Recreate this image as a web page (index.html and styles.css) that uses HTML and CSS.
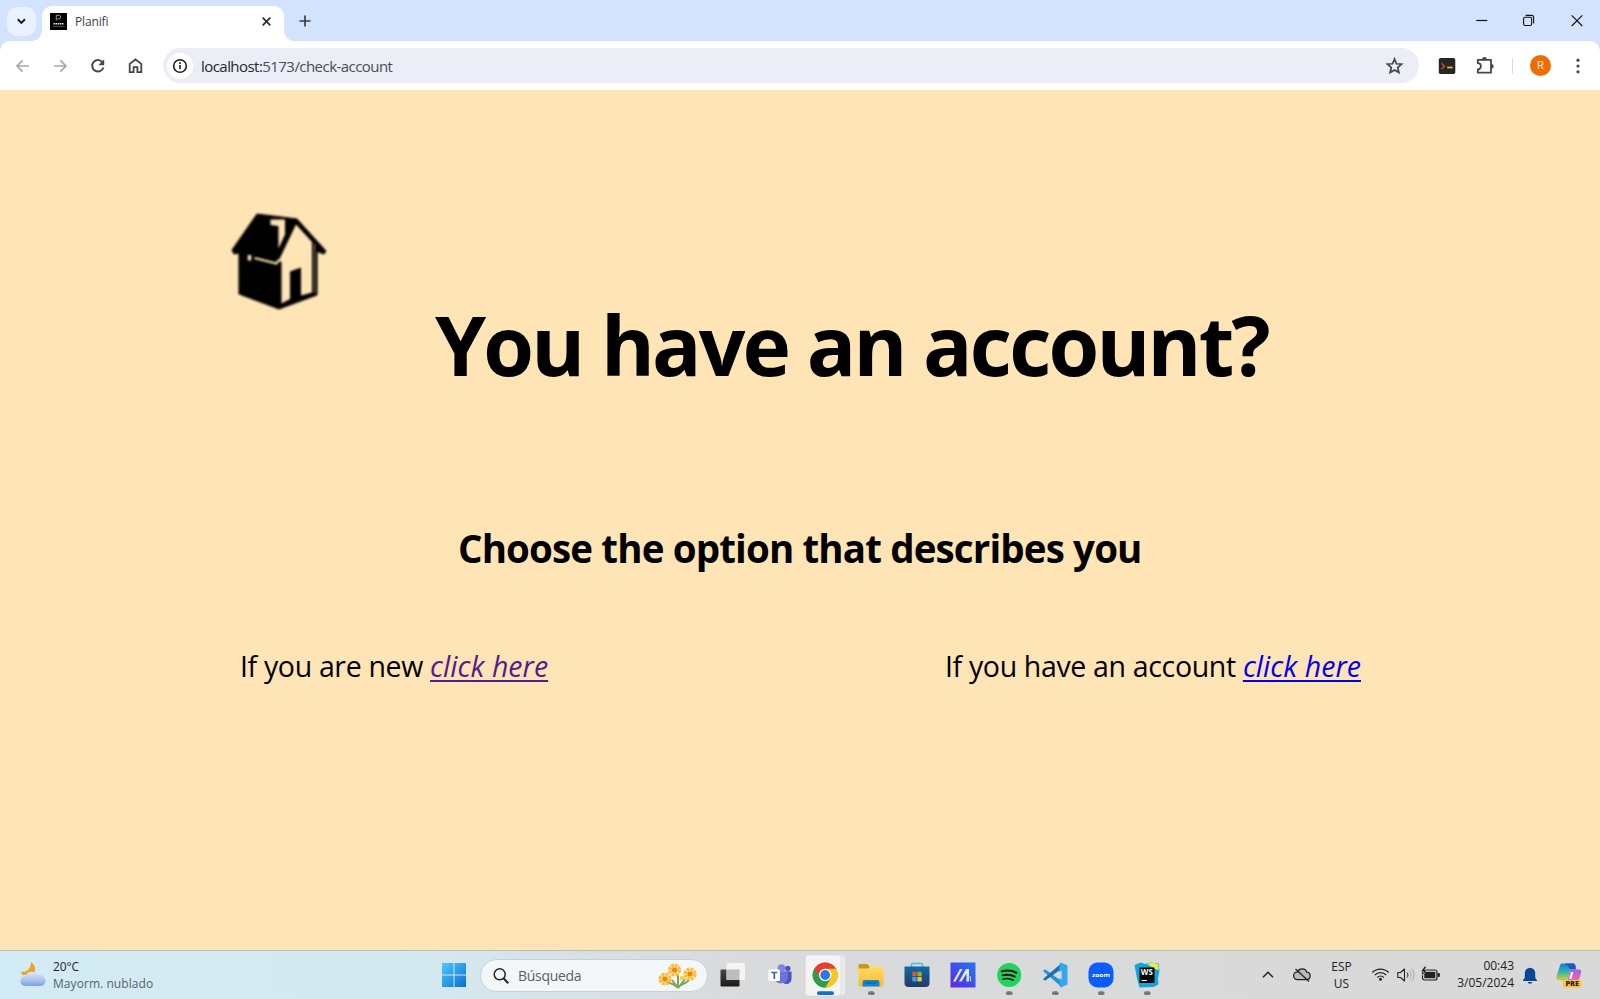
FILE: index.html
```html
<!DOCTYPE html>
<html lang="en">
<head>
<meta charset="utf-8">
<title>Planifi</title>
<link rel="stylesheet" href="styles.css">
</head>
<body>
<div class="screen">
  <header class="tabstrip">
    <button class="tab-search" aria-label="Search tabs"><svg width="29" height="29" viewBox="0 0 29 29"><path d="M10.8 12.3l3.6 3.6 3.6-3.6" fill="none" stroke="#1f1f1f" stroke-width="2"/></svg></button>
    <div class="tab">
      <svg class="favicon" width="17" height="17" viewBox="0 0 17 17"><rect width="17" height="17" fill="#000"/><path d="M6.3 7.5V2.3h2.5a1.7 1.7 0 0 1 0 3.6H7.4" fill="none" stroke="#aaa" stroke-width=".9"/><path d="M3.5 10.7h10" stroke="#ddd" stroke-width="1.6" stroke-dasharray="1.6 .5"/><path d="M2.5 13.3h12" stroke="#777" stroke-width=".7"/></svg>
      <span class="tab-title">Planifi</span>
      <svg class="tab-close" width="17" height="17" viewBox="0 0 17 17"><path d="M4.7 4.7l7.6 7.6M12.3 4.7l-7.6 7.6" stroke="#2b2b2b" stroke-width="1.7"/></svg>
    </div>
    <svg class="new-tab" width="20" height="20" viewBox="0 0 20 20"><path d="M10 4.500v11M4.500 10h11" stroke="#3c3f43" stroke-width="1.700"/></svg>
    <div class="window-controls">
      <svg width="47" height="41" viewBox="0 0 47 41"><path d="M18.300 20.500h11" stroke="#111" stroke-width="1.200"/></svg>
      <svg width="48" height="41" viewBox="0 0 48 41"><rect x="18.600" y="17.300" width="8" height="8.200" rx="1.500" fill="none" stroke="#111" stroke-width="1.100"/><path d="M20.600 15.400h6a2 2 0 0 1 2 2v6.200" fill="none" stroke="#111" stroke-width="1.100"/></svg>
      <svg width="47" height="41" viewBox="0 0 47 41"><path d="M18.700 15.400l10.600 10.600M29.300 15.400L18.700 26" stroke="#111" stroke-width="1.100"/></svg>
    </div>
  </header>

  <div class="toolbar">
    <nav class="nav-icons">
      <svg width="37" height="36" viewBox="0 0 37 36"><path d="M24 18H12.500M17.700 12.300L12 18l5.700 5.700" fill="none" stroke="#a9a9a9" stroke-width="1.700"/></svg>
      <svg width="37" height="36" viewBox="0 0 37 36"><path d="M12 18H23.500M18.300 12.300l5.700 5.700-5.700 5.700" fill="none" stroke="#a9a9a9" stroke-width="1.700"/></svg>
      <svg width="38" height="36" viewBox="0 0 38 36"><path d="M23.800 14.800A5.700 5.700 0 1 0 24.400 19.400" fill="none" stroke="#444746" stroke-width="1.900"/><path d="M25.200 11.300v5.900h-5.900z" fill="#444746"/></svg>
      <svg width="37" height="36" viewBox="0 0 37 36"><path d="M12.700 24.200v-8.300l5.800-4.400 5.800 4.400v8.300h-3.900v-5h-3.800v5z" fill="none" stroke="#444746" stroke-width="1.800"/></svg>
    </nav>
    <div class="omnibox">
      <span class="site-info"><svg width="26" height="26" viewBox="0 0 26 26"><circle cx="13" cy="13" r="6.300" fill="none" stroke="#1f1f1f" stroke-width="1.600"/><path d="M13 12v4.300M13 9.200v1.700" stroke="#1f1f1f" stroke-width="1.600"/></svg></span>
      <span class="url"><b>localhost:</b>5173/check-account</span>
      <svg class="star" width="20" height="20" viewBox="0 0 20 20"><path d="M9.500 3l1.950 4.750 5.100.45-3.850 3.350 1.150 5L9.500 13.950 5.150 16.550l1.150-5L2.450 8.200l5.100-.45z" fill="none" stroke="#444746" stroke-width="1.700"/></svg>
    </div>
    <div class="extensions">
      <svg width="38" height="36" viewBox="0 0 38 36"><rect x="10.800" y="10" width="16.500" height="16" rx="1.800" fill="#262626"/><path d="M13.600 15.300l2.900 2.900-2.900 2.900" fill="none" stroke="#e5452f" stroke-width="1.400"/><path d="M19.200 19.500h5.400" stroke="#f2c029" stroke-width="1.700"/></svg>
      <svg width="38" height="36" viewBox="0 0 38 36"><path d="M11.800 11.800h13.200v12.900H11.800v-3.300a3.100 3.100 0 0 0 0-6.200z" fill="none" stroke="#444746" stroke-width="1.800" stroke-linejoin="round"/><path d="M16 11.500a2.400 2.400 0 0 1 4.800 0zM25.300 15.900a2.400 2.400 0 0 1 0 4.800z" fill="#444746"/></svg>
      <span class="divider"></span>
      <span class="avatar">R</span>
      <svg width="20" height="36" viewBox="0 0 20 36"><g fill="#444746"><circle cx="10" cy="12.200" r="1.600"/><circle cx="10" cy="18" r="1.600"/><circle cx="10" cy="23.800" r="1.600"/></g></svg>
    </div>
  </div>

  <main class="page">
    <svg class="house" width="100" height="104" viewBox="0 0 100 104">
      <path d="M27 4L67 9 96 41l-2 3-7-2.500V85L49 99 9 84V43L4 44 2 40z" fill="#000" stroke="#000" stroke-linejoin="round"/>
      <path d="M66 14.500L82 32v50.500l-11 3V57.500l-11 4V89l-8.500 4.500V52L48.500 51z" fill="#ffe4b5"/>
      <path d="M40.500 9.500h14.500v15l-6.500 14V16l-8-1z" fill="#ffe4b5"/>
      <path d="M24.500 48l22 5.500 2.500-4" fill="none" stroke="#ffe4b5" stroke-width="2.200"/>
      <path d="M19.500 45v5.500" stroke="#ffe4b5" stroke-width="3.500"/>
      <path d="M84.500 33.500V83" stroke="#d9bf94" stroke-width=".8"/>
    </svg>
    <h1 class="title">You have an account?</h1>
    <h2 class="subtitle">Choose the option that describes you</h2>
    <div class="options">
      <p class="option option-new">If you are new <a class="visited" href="#">click here</a></p>
      <p class="option option-existing">If you have an account <a href="#">click here</a></p>
    </div>
  </main>

  <footer class="taskbar">
    <div class="weather">
      <svg width="28" height="28" viewBox="0 0 28 28"><defs><linearGradient id="cloud" x1="0" y1="0" x2="0" y2="1"><stop offset="0" stop-color="#dbe8fb"/><stop offset=".6" stop-color="#a9c4ee"/><stop offset="1" stop-color="#7d9fe0"/></linearGradient></defs><path d="M12 1c4 3 6 8 2 13H3.500C2 12 2.300 11.500 2.500 10.500 7 12 12 8 12 1z" fill="#f0a32b"/><path d="M6.500 25a5 5 0 0 1-.3-10C7.500 10.500 15.500 8.500 18.500 14c4-1 8 1.500 8 5.500 0 3.500-2.500 5.500-5.500 5.500z" fill="url(#cloud)"/></svg>
      <div class="weather-text"><span class="temp">20°C</span><span class="sky">Mayorm. nublado</span></div>
    </div>
    <div class="apps">
      <svg width="54" height="48" viewBox="0 0 54 48"><defs><linearGradient id="win" x1="0" y1="0" x2="1" y2="1"><stop offset="0" stop-color="#4fc9fb"/><stop offset="1" stop-color="#0571d2"/></linearGradient></defs><path d="M15 12h11.500v11.500H15zM27.500 12H39v11.500H27.500zM15 24.500h11.500V36H15zM27.500 24.500H39V36H27.500z" fill="url(#win)"/></svg>
      <div class="search">
        <svg width="18" height="18" viewBox="0 0 18 18"><circle cx="7.700" cy="7.300" r="5.500" fill="none" stroke="#222" stroke-width="1.500"/><path d="M11.700 11.500l4.600 4.700" stroke="#222" stroke-width="2"/></svg>
        <span class="search-label">Búsqueda</span>
        <svg class="flowers" width="42" height="28" viewBox="0 0 42 28"><path d="M21 26C18 22 12 21 9 20M21 26V13M21 26c2-4 8-4 11-8M21 26l-6-8M22 25l6-8" fill="none" stroke="#7da453" stroke-width="2"/><g fill="none" stroke="#fbbf37" stroke-width="4.200" stroke-dasharray="2.700 .8"><circle cx="8" cy="17" r="4.500"/><circle cx="17.500" cy="8" r="4.500"/><circle cx="33" cy="12" r="4.500"/></g><g fill="#e58a10"><circle cx="8" cy="17" r="2.500"/><circle cx="17.500" cy="8" r="2.500"/><circle cx="33" cy="12" r="2.500"/></g><circle cx="25" cy="16" r="2.200" fill="#f6cf50"/></svg>
      </div>
      <svg width="46" height="48" viewBox="0 0 46 48"><defs><linearGradient id="tv" x1="0" y1="0" x2="0" y2="1"><stop offset="0" stop-color="#444"/><stop offset="1" stop-color="#1c1c1c"/></linearGradient></defs><rect x="10.500" y="18.500" width="19" height="17" rx="1" fill="url(#tv)"/><rect x="16.500" y="12" width="18.500" height="17" rx="1" fill="#f4f4f4"/><path d="M16.500 18.500h13V29h-13z" fill="#bcbcbc"/></svg>
      <svg width="46" height="48" viewBox="0 0 46 48"><circle cx="31.800" cy="17.500" r="2.700" fill="#4b53bc"/><path d="M27 20.500h8.500v8a5 5 0 0 1-8.500 3z" fill="#4b53bc"/><circle cx="25.500" cy="17" r="3.800" fill="#7b83eb"/><path d="M19 20.500h13V27a7 6.500 0 0 1-13 2z" fill="#6a72dc"/><rect x="12.500" y="18.500" width="11.500" height="11.500" rx="1" fill="#fff"/><path d="M15.300 21.500h6M18.300 21.500v6.500" stroke="#4b53bc" stroke-width="1.700"/></svg>
      <svg width="46" height="48" viewBox="0 0 46 48"><rect x="8" y="4.500" width="35" height="40" rx="3.500" fill="#ebebeb"/><rect x="3.200" y="4" width="36" height="41" rx="3.500" fill="#f4f4f4" stroke="#d5d5d5" stroke-width=".6"/><circle cx="23.200" cy="24" r="12.500" fill="#34a853"/><path d="M23.200 24L12.400 17.700A12.500 12.500 0 0 1 34 17.700z" fill="#ea3d2f"/><path d="M23.200 17.700H34A12.500 12.500 0 0 1 23.200 36.500l5.500-9.500z" fill="#fbc71d"/><path d="M12.400 17.700L17.700 27h5V17.700z" fill="#ea3d2f"/><path d="M12.400 17.700a12.500 12.500 0 0 0 10.800 18.800L28.700 27H17.700z" fill="#2f9c48"/><circle cx="23.200" cy="24" r="6.200" fill="#fff"/><circle cx="23.200" cy="24" r="4.900" fill="#3176e8"/><rect x="15" y="40.300" width="17" height="3.800" rx="1.900" fill="#1272c4"/></svg>
      <svg width="46" height="48" viewBox="0 0 46 48"><defs><linearGradient id="fold" x1="0" y1="0" x2="0" y2="1"><stop offset="0" stop-color="#ffdb68"/><stop offset="1" stop-color="#f8bd2c"/></linearGradient></defs><path d="M10.500 14.500a1.500 1.500 0 0 1 1.500-1.500h7l2.500 2.500V19h-11z" fill="#cf9414"/><path d="M10.500 17.500h10l2-2H34a1.500 1.500 0 0 1 1.500 1.500v17a1.500 1.500 0 0 1-1.500 1.500H12a1.500 1.500 0 0 1-1.500-1.500z" fill="url(#fold)"/><path d="M14.500 35.500V31a2 2 0 0 1 2-2h13a2 2 0 0 1 2 2v4.500z" fill="#1585cf"/><path d="M17.500 32h11" stroke="#0c5c99" stroke-width="1.200"/><rect x="20" y="40.300" width="6.500" height="3.800" rx="1.900" fill="#777"/></svg>
      <svg width="46" height="48" viewBox="0 0 46 48"><defs><linearGradient id="store" x1="0" y1="0" x2="0" y2="1"><stop offset="0" stop-color="#1467ad"/><stop offset="1" stop-color="#203a63"/></linearGradient></defs><path d="M17.500 16.500v-3a1 1 0 0 1 1-1h9a1 1 0 0 1 1 1v3" fill="none" stroke="#42bdec" stroke-width="1.600"/><path d="M10.500 15.500h25V32a4 4 0 0 1-4 4h-17a4 4 0 0 1-4-4z" fill="url(#store)"/><path d="M18.300 20.800h4.300v4.400h-4.300z" fill="#e8542c"/><path d="M23.400 20.800h4.300v4.400h-4.300z" fill="#7fba2c"/><path d="M18.300 26h4.300v4.400h-4.300z" fill="#31a7e8"/><path d="M23.400 26h4.300v4.400h-4.300z" fill="#f9c325"/></svg>
      <svg width="46" height="48" viewBox="0 0 46 48"><defs><linearGradient id="asus" x1="1" y1="0" x2="0" y2="1"><stop offset="0" stop-color="#2676f2"/><stop offset=".5" stop-color="#3d50ee"/><stop offset="1" stop-color="#6a20e8"/></linearGradient></defs><rect x="10.500" y="11.500" width="25" height="25" fill="url(#asus)"/><path d="M13 30.500l7-12.500h2.500l-7 12.500zM19 30.500L26 18h3v12.500h-2.500v-8l-5 8z" fill="#e3ecff"/><path d="M27 26h3.500v4.500" fill="none" stroke="#b4cafd" stroke-width="1.200"/></svg>
      <svg width="46" height="48" viewBox="0 0 46 48"><circle cx="23.200" cy="24" r="12" fill="#1fd35f"/><g fill="none" stroke="#111" stroke-linecap="round"><path d="M16 20.300c5-1.300 10.200-.9 14.300 1.500" stroke-width="2.200"/><path d="M16.500 24.300c4.500-1.100 8.800-.7 12.300 1.300" stroke-width="1.900"/><path d="M17 28c3.800-.9 7.300-.5 10.300 1.200" stroke-width="1.600"/></g><rect x="20" y="40.300" width="6.500" height="3.800" rx="1.900" fill="#777"/></svg>
      <svg width="46" height="48" viewBox="0 0 46 48"><path d="M11 20l2-1.700L30 30.500v5.700z" fill="#2490d6"/><path d="M11 28l2 1.700L30 17.500v-5.700z" fill="#1474b8"/><path d="M29 11.500l6.500 3v19l-6.500 3-1.500-1.300V12.800z" fill="#35a5ec"/><path d="M29.700 19.500v9l-6-4.500z" fill="#d9d9d9"/><rect x="20" y="40.300" width="6.500" height="3.800" rx="1.900" fill="#777"/></svg>
      <svg width="46" height="48" viewBox="0 0 46 48"><rect x="10.500" y="11.500" width="25" height="25" rx="9" fill="#0b5cff"/><text class="zoom-label" x="23" y="26" text-anchor="middle" textLength="18" lengthAdjust="spacingAndGlyphs">zoom</text><rect x="20" y="40.300" width="6.500" height="3.800" rx="1.900" fill="#777"/></svg>
      <svg width="46" height="48" viewBox="0 0 46 48"><path d="M10.500 14l6-2.500 5 1.500 5-1.500 8 1 1 7-1.500 8 .5 6-5 2.500-14 .5-2.500-9z" fill="#11a5dc"/><path d="M23 13l5-1.500 6 1.500 1 6-4-1z" fill="#e8ef4d"/><rect x="15.500" y="16.500" width="15" height="15.500" fill="#050505"/><text class="ws-label" x="16.800" y="23.800" textLength="12" lengthAdjust="spacingAndGlyphs">WS</text><path d="M17.500 29.500h5.500" stroke="#fff" stroke-width="1"/><rect x="20" y="40.300" width="6.500" height="3.800" rx="1.900" fill="#777"/></svg>
    </div>
    <div class="tray">
      <svg width="34" height="48" viewBox="0 0 34 48"><path d="M12 26.200l5-5 5 5" fill="none" stroke="#222" stroke-width="1.500"/></svg>
      <svg width="34" height="48" viewBox="0 0 34 48"><path d="M12.500 28.700a3.900 3.900 0 0 1 0-7.800c1.500-4 8-4.300 9.300.3 4.500.3 4.500 7.300-.3 7.500z" fill="#bbb" stroke="#222" stroke-width="1.300"/><path d="M10.500 18L24 30.500" stroke="#222" stroke-width="1.300"/></svg>
      <div class="lang"><span>ESP</span><span>US</span></div>
      <svg width="25" height="48" viewBox="0 0 25 48"><g fill="none" stroke="#222" stroke-width="1.200"><path d="M4.300 21.500c4.600-4.600 11.800-4.600 16.400 0M6.800 24c3.200-3.200 8.200-3.200 11.400 0M9.200 26.500c1.900-1.900 4.700-1.900 6.600 0"/></g><circle cx="12.500" cy="28.300" r="1.500" fill="#222"/></svg>
      <svg width="25" height="48" viewBox="0 0 25 48"><path d="M4.800 21.500h2.700l4-3.500v12l-4-3.500H4.800z" fill="none" stroke="#222" stroke-width="1.100" stroke-linejoin="round"/><path d="M14 21.500c1.300 1.500 1.300 3.500 0 5" fill="none" stroke="#222" stroke-width="1"/><path d="M16.300 19.500c2.300 2.500 2.300 6.500 0 9M18.500 17.700c3.300 3.500 3.300 9 0 12.600" fill="none" stroke="#aaa" stroke-width="1"/></svg>
      <svg width="25" height="48" viewBox="0 0 25 48"><rect x="4.500" y="19" width="14.500" height="10" rx="2" fill="none" stroke="#222" stroke-width="1.200"/><path d="M6.300 20.800h11v6.400h-11z" fill="#222"/><path d="M20 22.500h1.300v3H20z" fill="#222" stroke="#222"/><path d="M6.500 15.500L3 20.500h2.500l-1 4 4.500-5.500H6.500l2-3.500z" fill="#111" stroke="#d9d9d9" stroke-width=".5"/></svg>
      <div class="clock"><span>00:43</span><span>3/05/2024</span></div>
      <svg width="32" height="48" viewBox="0 0 32 48"><path d="M9 29.300l1.800-2.600V22a5.200 5.200 0 0 1 10.400 0v4.700l1.800 2.600v.7H9z" fill="#0b4696"/><path d="M13.800 31h4.400a2.200 1.800 0 0 1-4.400 0z" fill="#0b4696"/></svg>
      <svg class="copilot" width="54" height="48" viewBox="0 0 54 48"><defs><linearGradient id="cpa" x1="0" y1="0" x2="0" y2="1"><stop offset="0" stop-color="#1a7be0"/><stop offset=".5" stop-color="#2fb8a4"/><stop offset="1" stop-color="#e5c838"/></linearGradient><linearGradient id="cpb" x1="0" y1="0" x2="0" y2="1"><stop offset="0" stop-color="#a45cf0"/><stop offset=".6" stop-color="#ee6aa0"/><stop offset="1" stop-color="#f39b50"/></linearGradient></defs><path d="M19 12.500h11c2 0 2.500 1.500 3 4h-5l-4 13h-8c-2.500 0-3-2-2.300-5l3-9c.5-2 1-3 2.300-3z" fill="url(#cpa)"/><path d="M22 12.500h8c2 0 2.500 2.500 3 6h-5.500z" fill="#1859c4"/><path d="M27.500 18.500H36c2.300 0 2.500 2 1.800 4.500l-3 9c-1 3-2 4-4 4h-8.300z" fill="url(#cpb)"/><path d="M28 21h2.500l-2 7H26z" fill="#ececec"/><rect x="20" y="29" width="18.500" height="7.500" rx="1.500" fill="#fcc62b"/><text class="pre-label" x="22.500" y="35" textLength="13.500" lengthAdjust="spacingAndGlyphs">PRE</text></svg>
    </div>
  </footer>
</div>
</body>
</html>
```
FILE: styles.css
```css
* { box-sizing: border-box; }
body { margin: 0; font-family: "Open Sans", "Noto Sans", sans-serif; }
svg { display: block; flex: none; }
.screen { width: 1600px; height: 999px; display: flex; flex-direction: column; overflow: hidden; background: #d3e2fd; }

.tabstrip { height: 41px; flex: none; display: flex; align-items: flex-start; padding: 6px 0 0 7px; }
.tab-search { width: 29px; height: 29px; margin: 1px 6px 0 0; padding: 0; border: 0; border-radius: 10px; background: #e9f0fe; }
.tab { position: relative; width: 242px; height: 35px; display: flex; align-items: center; padding: 0 9px 5px 8px; border-radius: 10px 10px 0 0; background: #fff; }
.tab::before, .tab::after { content: ""; position: absolute; bottom: 0; width: 10px; height: 10px; }
.tab::before { left: -10px; background: radial-gradient(circle at 0 0, transparent 9.5px, #fff 10px); }
.tab::after { right: -10px; background: radial-gradient(circle at 100% 0, transparent 9.5px, #fff 10px); }
.tab-title { flex: 1; margin-left: 8px; padding-top: 1px; font-size: 12px; line-height: 16px; letter-spacing: -.15px; color: #3a3d42; }
.new-tab { margin: 5px 0 0 11px; }
.window-controls { display: flex; margin: -6px 0 0 auto; }

.toolbar { height: 49px; flex: none; display: flex; align-items: center; padding: 0 12px 0 5px; background: #fff; border-radius: 10px 10px 0 0; }
.nav-icons { display: flex; padding-top: 1px; }
.omnibox { width: 1256px; height: 35px; margin-left: 9px; display: flex; align-items: center; padding: 0 14px 0 4px; border-radius: 18px; background: #ebeef7; }
.site-info { width: 26px; height: 26px; border-radius: 50%; background: #fff; }
.url { margin-left: 8px; font-size: 15px; line-height: 20px; letter-spacing: -.55px; color: #4a4d52; }
.url b { font-weight: 400; color: #26282b; }
.star { margin-left: auto; }
.extensions { display: flex; align-items: center; margin-left: 9px; }
.divider { width: 1px; height: 16px; margin-left: 8px; background: #cfdcf5; }
.avatar { width: 21px; height: 21px; margin: 0 17px; border-radius: 50%; background: #ee6c02; color: #ffe9d8; font: 11px/21px Roboto, sans-serif; text-align: center; }

.page { height: 860px; flex: none; display: flex; flex-direction: column; background: #ffe4b5; color: #000; }
.house { margin: 120px 0 0 230px; filter: blur(.9px); }
.house + .title { margin: -26px 0 0 435px; }
.title { font-size: 82px; line-height: 112px; font-weight: 700; letter-spacing: -2.8px; white-space: nowrap; }
.subtitle { margin: 122px 0 0 458px; font-size: 38.5px; line-height: 52px; font-weight: 700; letter-spacing: -.86px; white-space: nowrap; }
.options { display: flex; justify-content: space-between; margin-top: 72px; padding: 0 239px 0 240px; }
.option { margin: 0; font-size: 28.5px; line-height: 40px; letter-spacing: -.34px; white-space: nowrap; }
.option a { font-style: italic; letter-spacing: .05px; color: #0000ee; text-decoration-thickness: 2px; text-underline-offset: 3px; text-decoration-skip-ink: none; }
.option a.visited { color: #551a8b; }

.taskbar { height: 49px; flex: none; display: flex; border-top: 1px solid #b7bcbf; background: linear-gradient(90deg, #d3ebf4 0, #d4eaf2 25%, #d7e0e5 38%, #d9dadb 47%, #d9d9d9 100%); color: #222; }
.weather { width: 427px; display: flex; align-items: center; padding-left: 19px; }
.weather-text { display: flex; flex-direction: column; margin: -1px 0 0 6px; font-size: 12px; line-height: 17px; }
.temp { letter-spacing: -.1px; }
.sky { color: #586268; letter-spacing: .06px; }
.apps { display: flex; }
.search { width: 228px; height: 33px; margin: 8px 2px 0 -1px; display: flex; align-items: center; padding: 0 8px 0 11px; border: 1px solid #c9d0d5; border-radius: 17px; background: #f3f7fa; }
.search-label { margin-left: 8px; font-size: 14px; letter-spacing: -.3px; color: #5c5f61; }
.flowers { margin-left: auto; }
.zoom-label { font: 700 6px "Open Sans", sans-serif; fill: #fff; }
.ws-label { font: 700 8px "Open Sans", sans-serif; fill: #fff; }
.pre-label { font: 800 6px "Open Sans", sans-serif; fill: #222; }
.tray { display: flex; margin-left: auto; padding-right: 3px; }
.lang, .clock { display: flex; flex-direction: column; padding-top: 7px; font-size: 12px; line-height: 17px; }
.lang { width: 45px; margin-right: 4px; align-items: center; }
.clock { width: 71px; padding-top: 6px; align-items: flex-end; letter-spacing: 0; }
.copilot { margin-left: -3px; }
```
